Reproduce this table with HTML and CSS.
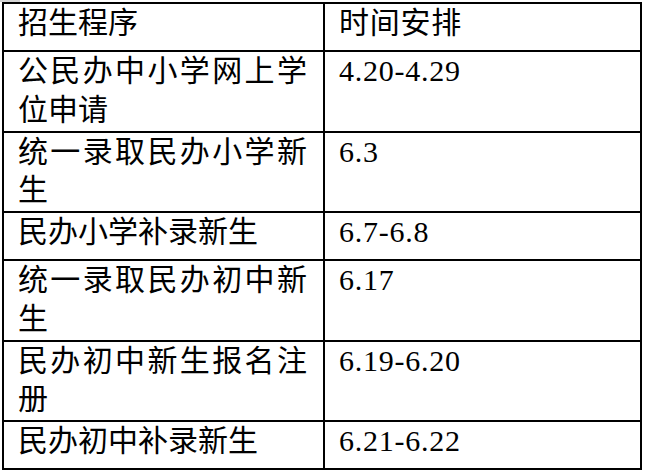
FILE: index.html
```html
<!DOCTYPE html>
<html lang="zh-CN">
<head>
<meta charset="utf-8">
<title>招生程序</title>
<link rel="stylesheet" href="styles.css">
</head>
<body>
<div class="corner-mark"></div>
<div class="schedule">
  <div class="cell step">招生程序</div>
  <div class="cell time">时间安排</div>

  <div class="cell step">公民办中小学网上学位申请</div>
  <div class="cell time">4.20-4.29</div>

  <div class="cell step">统一录取民办小学新生</div>
  <div class="cell time">6.3</div>

  <div class="cell step">民办小学补录新生</div>
  <div class="cell time">6.7-6.8</div>

  <div class="cell step">统一录取民办初中新生</div>
  <div class="cell time">6.17</div>

  <div class="cell step">民办初中新生报名注册</div>
  <div class="cell time">6.19-6.20</div>

  <div class="cell step">民办初中补录新生</div>
  <div class="cell time">6.21-6.22</div>
</div>
</body>
</html>
```

FILE: styles.css
```css
html, body {
  margin: 0;
  padding: 0;
  background: #ffffff;
}

body {
  width: 646px;
  height: 476px;
  position: relative;
  overflow: hidden;
  font-family: "Liberation Serif", "Noto Sans CJK SC", serif;
  font-size: 30px;
  line-height: 38.5px;
  color: #000000;
}

.corner-mark {
  position: absolute;
  left: 0;
  top: 0;
  width: 20px;
  height: 2px;
  background: #d4d4d4;
}

.schedule {
  display: grid;
  grid-template-columns: 321px 317px;
  margin: 2px 0 0 2px;
  width: 640px;
  box-sizing: border-box;
  border-top: 2px solid #000000;
  border-left: 2px solid #000000;
}

.cell {
  box-sizing: border-box;
  min-height: 48px;
  border-right: 2px solid #000000;
  border-bottom: 2px solid #000000;
  padding: 0 16px 1.5px 14px;
  text-align: justify;
}

.time {
  padding-left: 14px;
  letter-spacing: 0.75px;
}
```
